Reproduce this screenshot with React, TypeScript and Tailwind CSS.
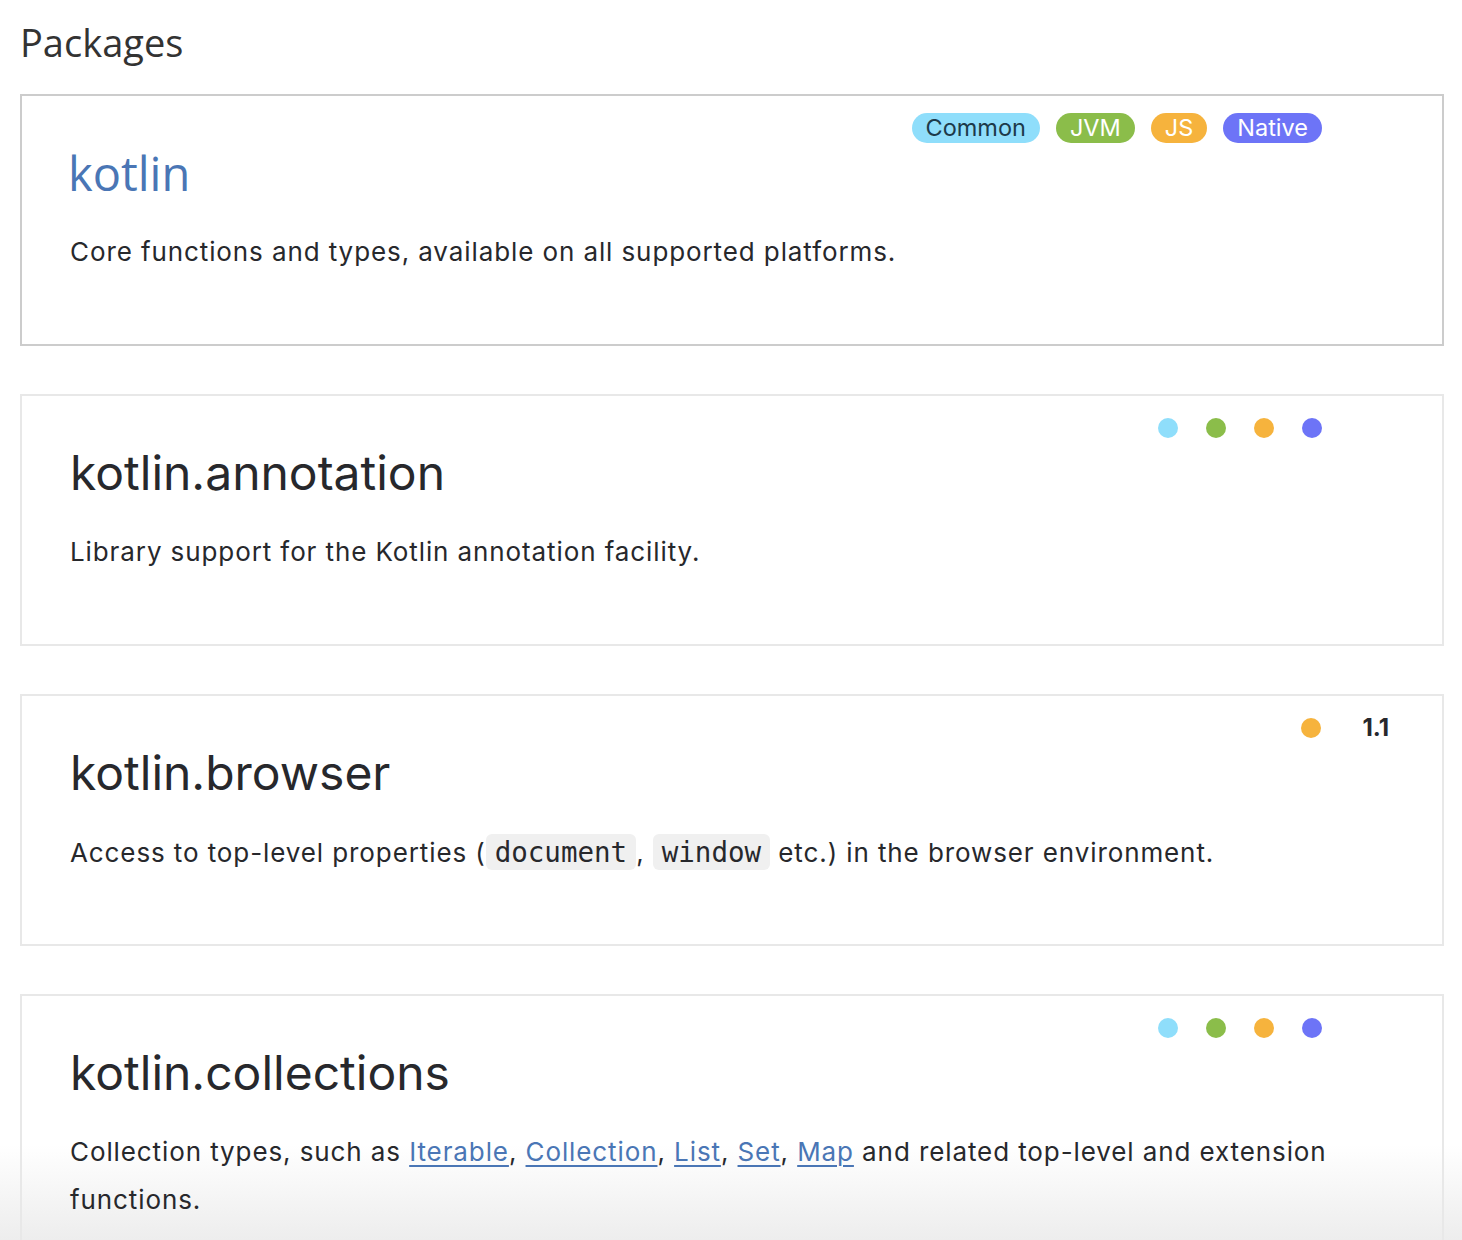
import type { ReactNode } from 'react'

type Platform = 'common' | 'jvm' | 'js' | 'native'

const PLATFORM_STYLE: Record<Platform, { dot: string; pill: string; label: string }> = {
  common: { dot: 'bg-[#8fdefb]', pill: 'bg-[#8fdefb] text-[#1d3a4a]', label: 'Common' },
  jvm: { dot: 'bg-[#8bbd4a]', pill: 'bg-[#8bbd4a] text-white', label: 'JVM' },
  js: { dot: 'bg-[#f6b33d]', pill: 'bg-[#f6b33d] text-white', label: 'JS' },
  native: { dot: 'bg-[#6d74f7]', pill: 'bg-[#6d74f7] text-white', label: 'Native' },
}

const ALL: Platform[] = ['common', 'jvm', 'js', 'native']

function Code({ children }: { children: ReactNode }) {
  return (
    <code className="rounded-[6px] bg-[#f0f0f0] px-[9px] py-[2px] font-['DejaVu_Sans_Mono',monospace] text-[27.5px] tracking-normal text-[#27282c]">
      {children}
    </code>
  )
}

function Ref({ children }: { children: ReactNode }) {
  return (
    <a href="#" className="text-[#4a76b5] underline decoration-[2px] underline-offset-[4px]">
      {children}
    </a>
  )
}

function Tags({ platforms, pills, since }: { platforms: Platform[]; pills?: boolean; since?: string }) {
  return (
    <div className="flex h-[30px] items-center justify-end pr-[120px]">
      {pills ? (
        <div className="flex items-center gap-4">
          {platforms.map((p) => (
            <span
              key={p}
              className={`flex h-[30px] items-center rounded-full px-[14px] text-[23.5px] leading-none ${PLATFORM_STYLE[p].pill}`}
            >
              {PLATFORM_STYLE[p].label}
            </span>
          ))}
        </div>
      ) : (
        <div className="flex items-center gap-[28px]">
          {platforms.map((p) => (
            <span key={p} className={`size-[20px] rounded-full ${PLATFORM_STYLE[p].dot}`} />
          ))}
        </div>
      )}
      {since && (
        <span className="-mr-[67px] ml-[41px] text-[24px] font-bold text-[#27282c]">{since}</span>
      )}
    </div>
  )
}

function PackageCard({
  name,
  link,
  platforms,
  pills,
  since,
  first,
  children,
}: {
  name: string
  link?: boolean
  platforms: Platform[]
  pills?: boolean
  since?: string
  first?: boolean
  children: ReactNode
}) {
  return (
    <div
      className={`min-h-[252px] border-2 pt-[17px] pb-[60px] ${first ? 'border-[#cccccc]' : 'border-[#e8e8e8]'}`}
    >
      <Tags platforms={platforms} pills={pills} since={since} />
      <div className="pl-[48px] pr-[110px]">
        <h3
          className={
            link
              ? "mt-[2px] -ml-[2px] font-['Open_Sans',sans-serif] text-[47px] leading-[56px] text-[#4a76b5]"
              : 'mt-[2px] text-[48px] leading-[56px] text-[#27282c]'
          }
        >
          {name}
        </h3>
        <p className="mt-[27px] text-[26px] leading-[48px] tracking-[0.9px] text-[#27282c]">{children}</p>
      </div>
    </div>
  )
}

export default function App() {
  return (
    <div className="relative h-[1240px] overflow-hidden bg-white font-['Inter',sans-serif]">
      {/* soft fade at the bottom of the viewport, behind the content */}
      <div className="pointer-events-none absolute inset-x-0 bottom-0 h-[95px] bg-gradient-to-b from-white to-[#ededed]" />
      <div className="relative px-[20px] pt-[14px] pr-[18px]">
        <h2 className="font-['Open_Sans',sans-serif] text-[38px] leading-[56px] text-[#333333]">Packages</h2>
        <div className="mt-[24px] flex flex-col gap-[48px]">
          <PackageCard name="kotlin" link platforms={ALL} pills first>
            Core functions and types, available on all supported platforms.
          </PackageCard>
          <PackageCard name="kotlin.annotation" platforms={ALL}>
            Library support for the Kotlin annotation facility.
          </PackageCard>
          <PackageCard name="kotlin.browser" platforms={['js']} since="1.1">
            Access to top-level properties (<Code>document</Code>, <Code>window</Code> etc.) in the browser
            environment.
          </PackageCard>
          <PackageCard name="kotlin.collections" platforms={ALL}>
            Collection types, such as <Ref>Iterable</Ref>, <Ref>Collection</Ref>, <Ref>List</Ref>, <Ref>Set</Ref>,{' '}
            <Ref>Map</Ref> and related top-level and extension functions.
          </PackageCard>
        </div>
      </div>
    </div>
  )
}
